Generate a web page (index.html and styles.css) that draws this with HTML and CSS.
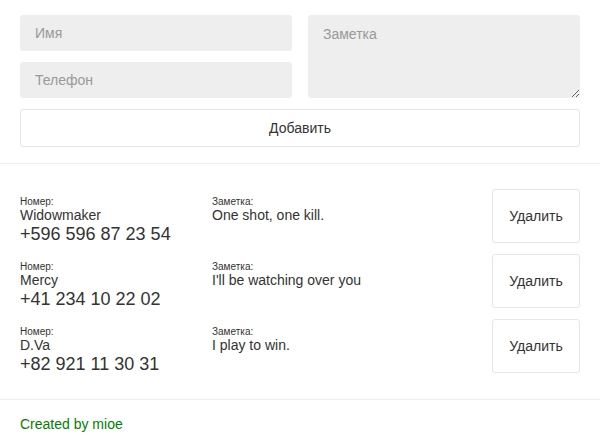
FILE: index.html
```html
<!DOCTYPE html>
<html lang="ru">
<head>
<meta charset="utf-8">
<link rel="stylesheet" href="styles.css">
</head>
<body>
<form class="form">
  <div class="fields">
    <div class="col">
      <input class="input" type="text" placeholder="Имя">
      <input class="input" type="text" placeholder="Телефон">
    </div>
    <textarea class="textarea" placeholder="Заметка"></textarea>
  </div>
  <button class="btn add" type="button">Добавить</button>
</form>
<ul class="list">
  <li class="row">
    <div class="contact">
      <div class="label">Номер:</div>
      <div class="name">Widowmaker</div>
      <div class="phone">+596 596 87 23 54</div>
    </div>
    <div class="note">
      <div class="label">Заметка:</div>
      <div class="text">One shot, one kill.</div>
    </div>
    <button class="btn del" type="button">Удалить</button>
  </li>
  <li class="row">
    <div class="contact">
      <div class="label">Номер:</div>
      <div class="name">Mercy</div>
      <div class="phone">+41 234 10 22 02</div>
    </div>
    <div class="note">
      <div class="label">Заметка:</div>
      <div class="text">I'll be watching over you</div>
    </div>
    <button class="btn del" type="button">Удалить</button>
  </li>
  <li class="row">
    <div class="contact">
      <div class="label">Номер:</div>
      <div class="name">D.Va</div>
      <div class="phone">+82 921 11 30 31</div>
    </div>
    <div class="note">
      <div class="label">Заметка:</div>
      <div class="text">I play to win.</div>
    </div>
    <button class="btn del" type="button">Удалить</button>
  </li>
</ul>
<footer class="footer">Created by mioe</footer>
</body>
</html>
```
FILE: styles.css
```css
* { box-sizing: border-box; }
html, body { margin: 0; padding: 0; background: #fff; }
body {
  font-family: "Liberation Sans", Arial, sans-serif;
  color: #333;
  font-size: 14px;
}
.form {
  padding: 15px 20px 16px;
  border-bottom: 1px solid #eee;
  display: flex;
  flex-direction: column;
  gap: 11px;
}
.fields {
  display: grid;
  grid-template-columns: 1fr 1fr;
  gap: 16px;
}
.col {
  display: flex;
  flex-direction: column;
  gap: 11px;
}
.input, .textarea {
  border: none;
  background: #eee;
  border-radius: 3px;
  font-family: "Liberation Sans", Arial, sans-serif;
  font-size: 14px;
  color: #333;
  outline: none;
  margin: 0;
}
.input {
  height: 36px;
  padding: 0 15px;
}
.textarea {
  height: 83px;
  padding: 11px 15px;
  resize: vertical;
}
.input::placeholder, .textarea::placeholder { color: #999; }
.btn {
  background: #fff;
  border: 1px solid #e6e6e6;
  border-radius: 3px;
  font-family: "Liberation Sans", Arial, sans-serif;
  font-size: 14px;
  color: #333;
  cursor: pointer;
  margin: 0;
}
.add { height: 38px; width: 100%; }
.list {
  list-style: none;
  margin: 0;
  padding: 25px 20px 26px;
  border-bottom: 1px solid #eee;
  display: flex;
  flex-direction: column;
  gap: 11px;
}
.row {
  display: flex;
  align-items: flex-start;
  height: 54px;
}
.contact { width: 192px; padding-top: 7px; }
.note { flex: 1; padding-top: 7px; }
.label { font-size: 10px; line-height: 11px; }
.name { font-size: 14px; line-height: 17px; }
.phone { font-size: 18px; line-height: 21px; }
.text { font-size: 14px; line-height: 17px; }
.del { width: 88px; height: 54px; flex: none; }
.footer {
  padding: 16px 20px;
  color: #008000;
  font-size: 14px;
}
```
